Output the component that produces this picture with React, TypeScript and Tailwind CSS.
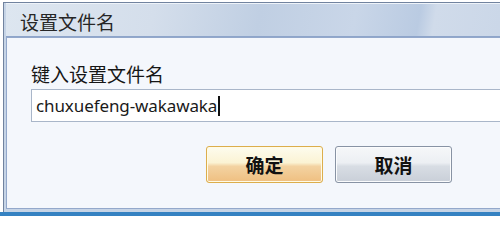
export default function App() {
  return (
    <div className="flex h-[216px] w-[500px] flex-col overflow-hidden bg-white pt-[2px] font-['Noto_Sans','Noto_Sans_CJK_SC',sans-serif]">
      {/* window frame, wider than the crop on the right */}
      <div className="ml-[3px] flex w-[530px] flex-1 flex-col border-l border-t border-[#71839f] bg-[#c6d4e6] pl-[2px] pb-[3px]">
        <div className="flex h-[34px] items-center border-t border-[#eef3f9] border-b border-b-[#8ea5ca] bg-[linear-gradient(100deg,#dde6f0_0%,#d4deeb_28%,#c0cfe3_48%,#c9d6e8_66%,#bacbe2_78%,#d0dbea_81%,#c8d5e7_100%)] pl-[14px] pt-[2px]">
          <span className="font-['Noto_Sans_CJK_SC',sans-serif] text-[19px] leading-none text-[#262626]">
            设置文件名
          </span>
        </div>
        <div className="flex flex-1 flex-col border border-[#93a8cb] bg-[#f4f7fc] pl-[24px] pt-[26px]">
          <label className="font-['Noto_Sans_CJK_SC',sans-serif] text-[19px] leading-[20px] text-[#161616]">
            键入设置文件名
          </label>
          <div className="mt-[5px] flex h-[33px] w-[500px] items-center border border-[#a9b6c9] bg-white pl-[4px]">
            <span className="text-[17px] leading-none tracking-[-0.1px] text-[#1a1a1a]">
              chuxuefeng-wakawaka
            </span>
            <span className="ml-[1px] h-[20px] w-[1.5px] bg-[#111]" />
          </div>
          <div className="mt-[24px] flex gap-[12px] pl-[175px]">
            <button
              type="button"
              className="flex h-[37px] w-[117px] items-center justify-center rounded-[3px] border border-[#dcae4c] bg-[linear-gradient(180deg,#fdfcee_0%,#fbf3d4_45%,#f3d3a2_55%,#efbf80_100%)] font-['Noto_Sans_CJK_SC',sans-serif] text-[19px] font-semibold leading-none text-[#111] shadow-[inset_0_0_0_1px_#fffbe6]"
            >
              确定
            </button>
            <button
              type="button"
              className="flex h-[37px] w-[117px] items-center justify-center rounded-[3px] border border-[#8893a4] bg-[linear-gradient(180deg,#f6f7f9_0%,#eceff3_45%,#d8dde4_55%,#c9cfd8_100%)] font-['Noto_Sans_CJK_SC',sans-serif] text-[19px] font-semibold leading-none text-[#111] shadow-[inset_0_0_0_1px_#fbfcfd]"
            >
              取消
            </button>
          </div>
        </div>
      </div>
      <div className="h-[4px] bg-[#3582c2]" />
    </div>
  );
}
